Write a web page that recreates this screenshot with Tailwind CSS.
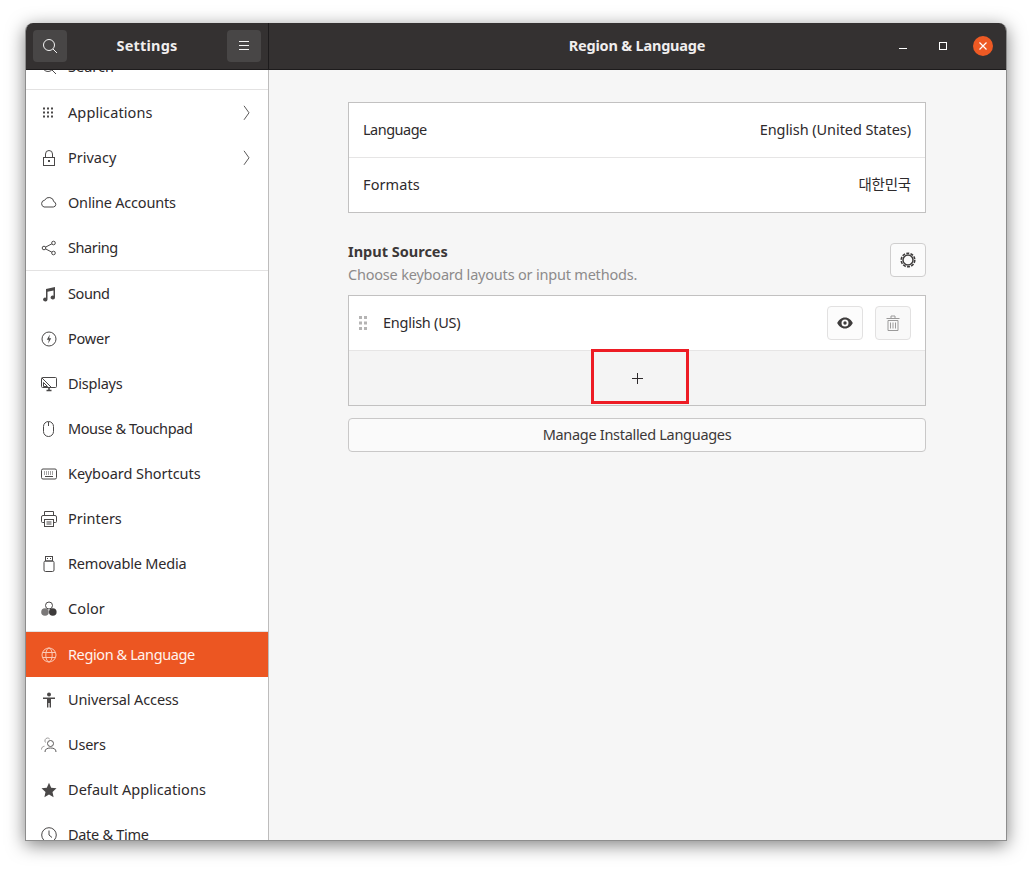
<!DOCTYPE html>
<html>
<head>
<meta charset="utf-8">
<script src="https://cdn.jsdelivr.net/npm/@tailwindcss/browser@4"></script>
</head>
<body class="bg-white w-[1032px] h-[869px] overflow-hidden pt-[23px] pl-[25px] font-['Noto_Sans','Noto_Sans_CJK_KR',sans-serif] text-[14.5px] text-[#2e2a2c]">
<div class="relative w-[982px] h-[818px] flex flex-col rounded-t-[8px] overflow-hidden border-x border-b border-[#8d8d8d] shadow-[0_4px_18px_rgba(0,0,0,0.5)]">
  <header class="h-[47px] shrink-0 flex bg-[#343131] text-white border-b border-[#1d1b1c]">
    <div class="w-[242px] shrink-0 flex items-center justify-between pl-[7px] pr-[7px]">
      <button class="w-[34px] h-[32px] rounded-[4px] bg-[#484646] flex items-center justify-center">
        <svg width="16" height="16" viewBox="0 0 16 16" fill="none" stroke="#f4f4f4" stroke-width="1"><circle cx="7" cy="7" r="5.500"/><path d="M11 11l4 4"/></svg>
      </button>
      <span class="font-bold text-[14.5px] tracking-[0.2px] text-[#f0eeee]">Settings</span>
      <button class="w-[34px] h-[32px] rounded-[4px] bg-[#484646] flex items-center justify-center">
        <svg width="12" height="10" viewBox="0 0 12 10" stroke="#f4f4f4" stroke-width="1"><path d="M1 .5h10M1 4.500h10M1 8.500h10"/></svg>
      </button>
    </div>
    <div class="w-px bg-[#1d1b1c]"></div>
    <div class="relative flex-1 flex items-center justify-center">
      <span class="font-bold text-[14.5px] tracking-[-0.2px] text-[#f0eeee] mr-[1px]">Region &amp; Language</span>
      <div class="absolute right-[13px] top-[13px] flex items-center gap-[20px]">
        <svg width="20" height="20" viewBox="0 0 20 20" stroke="#fff" fill="none"><path d="M6 12.500h8" stroke-width="1"/></svg>
        <svg width="20" height="20" viewBox="0 0 20 20" stroke="#fff" fill="none"><rect x="6.500" y="6.500" width="7" height="7" stroke-width="1"/></svg>
        <svg width="20" height="20" viewBox="0 0 20 20" fill="none"><circle cx="10" cy="10" r="10" fill="#ee5a24"/><path d="M6.500 6.500l7 7M13.500 6.500l-7 7" stroke="#fff" stroke-width="1.200"/></svg>
      </div>
    </div>
  </header>
  <div class="flex-1 flex min-h-0">
    <aside class="w-[242px] shrink-0 bg-white overflow-hidden">
      <nav class="-mt-[25px] flex flex-col">
        <div class="h-[45px] flex items-center pl-[15px] gap-[11px] border-b border-[#e3e2e2]">
          <svg class="text-[#4a4848]" width="16" height="16" viewBox="0 0 16 16" fill="none" stroke="currentColor"><circle cx="7" cy="7" r="5.500"/><path d="M11 11l4 4"/></svg><span>Search</span>
        </div>
        <div class="h-[45px] flex items-center pl-[15px] gap-[11px]">
          <svg width="16" height="16" viewBox="0 0 16 16" fill="#4a4848"><path d="M2 2.500h2v2H2zM6 2.500h2v2H6zM10 2.500h2v2h-2zM2 6.500h2v2H2zM6 6.500h2v2H6zM10 6.500h2v2h-2zM2 10.500h2v2H2zM6 10.500h2v2H6zM10 10.500h2v2h-2z"/></svg>
          <span class="flex-1 tracking-[0.1px]">Applications</span>
          <svg class="mr-[18px]" width="7" height="16" viewBox="0 0 7 16" fill="none" stroke="#5a5858"><path d="M1 .8l5 7-5 7"/></svg>
        </div>
        <div class="h-[45px] flex items-center pl-[15px] gap-[11px]">
          <svg width="16" height="16" viewBox="0 0 16 16" fill="none" stroke="#4a4848"><rect x="2.500" y="7.500" width="11" height="8" /><path d="M4.500 7.500V4a3.500 3.500 0 0 1 7 0v3.500"/><rect x="7" y="10" width="2" height="2" fill="#4a4848" stroke="none"/></svg>
          <span class="flex-1">Privacy</span>
          <svg class="mr-[18px]" width="7" height="16" viewBox="0 0 7 16" fill="none" stroke="#5a5858"><path d="M1 .8l5 7-5 7"/></svg>
        </div>
        <div class="h-[45px] flex items-center pl-[15px] gap-[11px]">
          <svg width="16" height="16" viewBox="0 0 16 16" fill="none" stroke="#4a4848"><path d="M3.500 13.500h9.300a2.700 2.700 0 0 0 .5-5.300A4.800 4.800 0 0 0 4.200 6.700 3.500 3.500 0 0 0 3.500 13.500z" transform="translate(-.5 -1.500)"/></svg>
          <span class="tracking-[-0.2px]">Online Accounts</span>
        </div>
        <div class="h-[46px] flex items-center pl-[15px] gap-[11px] border-b border-[#e3e2e2]">
          <svg width="16" height="16" viewBox="0 0 16 16" fill="none" stroke="#4a4848"><circle cx="3" cy="8" r="1.800"/><circle cx="12.500" cy="3" r="1.800"/><circle cx="12.500" cy="13" r="1.800"/><path d="M4.600 7.100l6.300-3.300M4.600 8.900l6.300 3.300"/></svg>
          <span class="tracking-[-0.4px]">Sharing</span>
        </div>
        <div class="h-[45px] flex items-center pl-[15px] gap-[11px]">
          <svg width="16" height="16" viewBox="0 0 16 16" fill="#4a4848"><path d="M5 3l9-2v10.500a2.200 1.900 0 1 1-1.500-1.800V4.500L6.500 5.800v7.700a2.200 1.900 0 1 1-1.500-1.800z"/></svg>
          <span class="tracking-[-0.4px]">Sound</span>
        </div>
        <div class="h-[45px] flex items-center pl-[15px] gap-[11px]">
          <svg width="16" height="16" viewBox="0 0 16 16" fill="none" stroke="#4a4848"><circle cx="8" cy="8" r="7"/><path d="M8.800 3.500L5.800 8.800h2l-.6 3.700 3-5.300h-2z" fill="#4a4848" stroke="none"/></svg>
          <span class="tracking-[-0.2px]">Power</span>
        </div>
        <div class="h-[45px] flex items-center pl-[15px] gap-[11px]">
          <svg width="16" height="16" viewBox="0 0 16 16" fill="none" stroke="#4a4848"><rect x=".5" y="1.500" width="15" height="10" rx="1"/><path d="M1 2l9 9M2.500 10.500v-4l4 4z"/><path d="M5.500 14.500h5M8 12v2" stroke-width="1.500"/></svg>
          <span class="tracking-[-0.25px]">Displays</span>
        </div>
        <div class="h-[45px] flex items-center pl-[15px] gap-[11px]">
          <svg width="16" height="16" viewBox="0 0 16 16" fill="none" stroke="#4a4848"><rect x="2.500" y=".5" width="10" height="15" rx="5"/><path d="M7.500 1v4"/></svg>
          <span class="tracking-[-0.4px]">Mouse &amp; Touchpad</span>
        </div>
        <div class="h-[45px] flex items-center pl-[15px] gap-[11px]">
          <svg width="16" height="16" viewBox="0 0 16 16" fill="none" stroke="#4a4848"><rect x=".5" y="3" width="15" height="10" rx="1.500"/><path d="M3 6h10M3 8h10" stroke-dasharray="1 1"/><path d="M4 10.500h8"/></svg>
          <span class="tracking-[-0.05px]">Keyboard Shortcuts</span>
        </div>
        <div class="h-[45px] flex items-center pl-[15px] gap-[11px]">
          <svg width="16" height="16" viewBox="0 0 16 16" fill="none" stroke="#4a4848"><path d="M3.500 4.500V.5h9v4M3 11.500H1.500a1 1 0 0 1-1-1V6a1.500 1.500 0 0 1 1.500-1.500h12A1.500 1.500 0 0 1 15.500 6v4.500a1 1 0 0 1-1 1H13"/><rect x="3.500" y="8.500" width="9" height="7"/><path d="M5.500 11h5M5.500 13h5"/></svg>
          <span>Printers</span>
        </div>
        <div class="h-[45px] flex items-center pl-[15px] gap-[11px]">
          <svg width="16" height="16" viewBox="0 0 16 16" fill="none" stroke="#4a4848"><rect x="3" y="5" width="10" height="10.500" rx="1.500"/><rect x="4.500" y=".5" width="7" height="4.500"/><path d="M6 2.500h1M9 2.500h1"/></svg>
          <span class="tracking-[-0.2px]">Removable Media</span>
        </div>
        <div class="h-[46px] flex items-center pl-[15px] gap-[11px] border-b border-[#e3e2e2]">
          <svg width="16" height="16" viewBox="0 0 16 16"><circle cx="8" cy="4.500" r="3.500" fill="none" stroke="#4a4848"/><circle cx="4" cy="11" r="3.800" fill="#7a7878"/><circle cx="11.800" cy="11" r="3.800" fill="#3d3b3b"/></svg>
          <span class="tracking-[0.1px]">Color</span>
        </div>
        <div class="h-[45px] flex items-center pl-[15px] gap-[11px] bg-[#ec5622] text-[#fff3ee]">
          <svg width="16" height="16" viewBox="0 0 16 16" fill="none" stroke="#fbc9b6"><circle cx="8" cy="8" r="7"/><ellipse cx="8" cy="8" rx="3.200" ry="7"/><path d="M1.500 5.500h13M1.500 10.500h13"/></svg>
          <span class="tracking-[-0.4px]">Region &amp; Language</span>
        </div>
        <div class="h-[45px] flex items-center pl-[15px] gap-[11px]">
          <svg width="16" height="16" viewBox="0 0 16 16" fill="#4a4848"><circle cx="8" cy="2.500" r="2"/><path d="M2 5.500h12V7h-4v8.500H8.600V11H7.400v4.500H6V7H2z"/></svg>
          <span class="tracking-[-0.13px]">Universal Access</span>
        </div>
        <div class="h-[45px] flex items-center pl-[15px] gap-[11px]">
          <svg width="16" height="16" viewBox="0 0 16 16" fill="none" stroke="#5a5858"><circle cx="9.500" cy="6.500" r="3"/><path d="M4 15c0-3 2-4 5.500-4s5.500 1 5.500 4"/><path d="M4.500 5.500a2.800 2.800 0 0 1 2-4.500c1 0 1.700.4 2.200 1M.5 12.500c0-2 1-3 3-3.300" stroke="#9a9898"/></svg>
          <span class="tracking-[-0.2px]">Users</span>
        </div>
        <div class="h-[45px] flex items-center pl-[15px] gap-[11px]">
          <svg width="16" height="16" viewBox="0 0 16 16" fill="#4a4848"><path d="M8 .8l2.200 4.900 5.300.6-4 3.600 1.100 5.300L8 12.500l-4.600 2.700 1.100-5.300-4-3.600 5.300-.6z"/></svg>
          <span class="tracking-[0.05px]">Default Applications</span>
        </div>
        <div class="h-[45px] flex items-center pl-[15px] gap-[11px]">
          <svg width="16" height="16" viewBox="0 0 16 16" fill="none" stroke="#4a4848"><circle cx="8" cy="8" r="7.300"/><path d="M8 3.500V8l3 2.500"/></svg>
          <span class="tracking-[-0.3px]">Date &amp; Time</span>
        </div>
      </nav>
    </aside>
    <div class="w-px bg-[#bdbcbc]"></div>
    <main class="relative flex-1 bg-[#f6f6f6] pt-[32px] pl-[79px]">
      <div class="w-[578px] flex flex-col">
        <section class="h-[111px] bg-white border border-[#c2c1c1] flex flex-col">
          <div class="h-[55px] border-b border-[#e6e5e5] flex items-center justify-between px-[14px]"><span class="tracking-[-0.5px]">Language</span><span class="tracking-[-0.07px]">English (United States)</span></div>
          <div class="flex-1 flex items-center justify-between px-[14px]"><span class="tracking-[0.1px]">Formats</span><span class="tracking-[-0.2px]">대한민국</span></div>
        </section>
        <div class="h-[82px] flex justify-between items-start pt-[30px]">
          <div class="leading-[23px] -mt-[3px]">
            <div class="font-bold text-[#3c3838]">Input Sources</div>
            <div class="text-[#8d8b8b] tracking-[-0.2px]">Choose keyboard layouts or input methods.</div>
          </div>
          <button class="w-[36px] h-[34px] rounded-[4px] bg-[#fbfbfb] border border-[#cfcece] flex items-center justify-center">
            <svg width="16" height="16" viewBox="0 0 16 16" fill="none" stroke="#3e3c3c"><circle cx="8" cy="8" r="5" stroke-width="1.500"/><circle cx="8" cy="8" r="6.800" stroke-width="1.500" stroke-dasharray="3 1.300"/></svg>
          </button>
        </div>
        <section class="h-[111px] border border-[#c2c1c1] flex flex-col">
          <div class="h-[55px] bg-white border-b border-[#e6e5e5] flex items-center pl-[9px] pr-[14px]">
            <svg class="mr-[15px]" width="10" height="16" viewBox="0 0 10 16" fill="#b5b4b4"><path d="M1 1h3v3H1zM6 1h3v3H6zM1 6.500h3v3H1zM6 6.500h3v3H6zM1 12h3v3H1zM6 12h3v3H6z"/></svg>
            <span class="flex-1 tracking-[-0.25px]">English (US)</span>
            <button class="w-[36px] h-[34px] rounded-[4px] bg-[#fcfcfc] border border-[#e2e1e1] flex items-center justify-center mr-[12px]">
              <svg width="16" height="12" viewBox="0 0 16 12"><path fill="#3e3c3c" fill-rule="evenodd" d="M8 .5c3.600 0 6.500 2.600 7.800 5.500C14.500 8.900 11.600 11.500 8 11.500S1.500 8.900.2 6C1.500 3.100 4.400.5 8 .5zM8 2.500a3.500 3.500 0 1 0 0 7 3.500 3.500 0 0 0 0-7zM8 4.300a1.700 1.700 0 1 1 0 3.400 1.700 1.700 0 0 1 0-3.400z"/></svg>
            </button>
            <button class="w-[36px] h-[34px] rounded-[4px] bg-[#f9f9f9] border border-[#e2e1e1] flex items-center justify-center">
              <svg width="14" height="16" viewBox="0 0 14 16" fill="none" stroke="#9b9a9a"><path d="M.5 3.500h13M5 3.500V1h4v2.500M2 5.500h10v10H2zM4.500 7.500v6M7 7.500v6M9.500 7.500v6"/></svg>
            </button>
          </div>
          <div class="flex-1 bg-[#f4f4f4] flex items-center justify-center">
            <svg width="11" height="11" viewBox="0 0 11 11" stroke="#2e2a2c"><path d="M5.500 0v11M0 5.500h11"/></svg>
          </div>
        </section>
        <button class="mt-[12px] h-[34px] rounded-[4px] bg-[#fafafa] border border-[#c9c8c8] text-center text-[#3c3838] tracking-[-0.3px]">Manage Installed Languages</button>
      </div>
      <div class="absolute left-[322px] top-[279px] w-[98px] h-[55px] border-[3px] border-[#ed1c24]"></div>
    </main>
  </div>
</div>
</body>
</html>
